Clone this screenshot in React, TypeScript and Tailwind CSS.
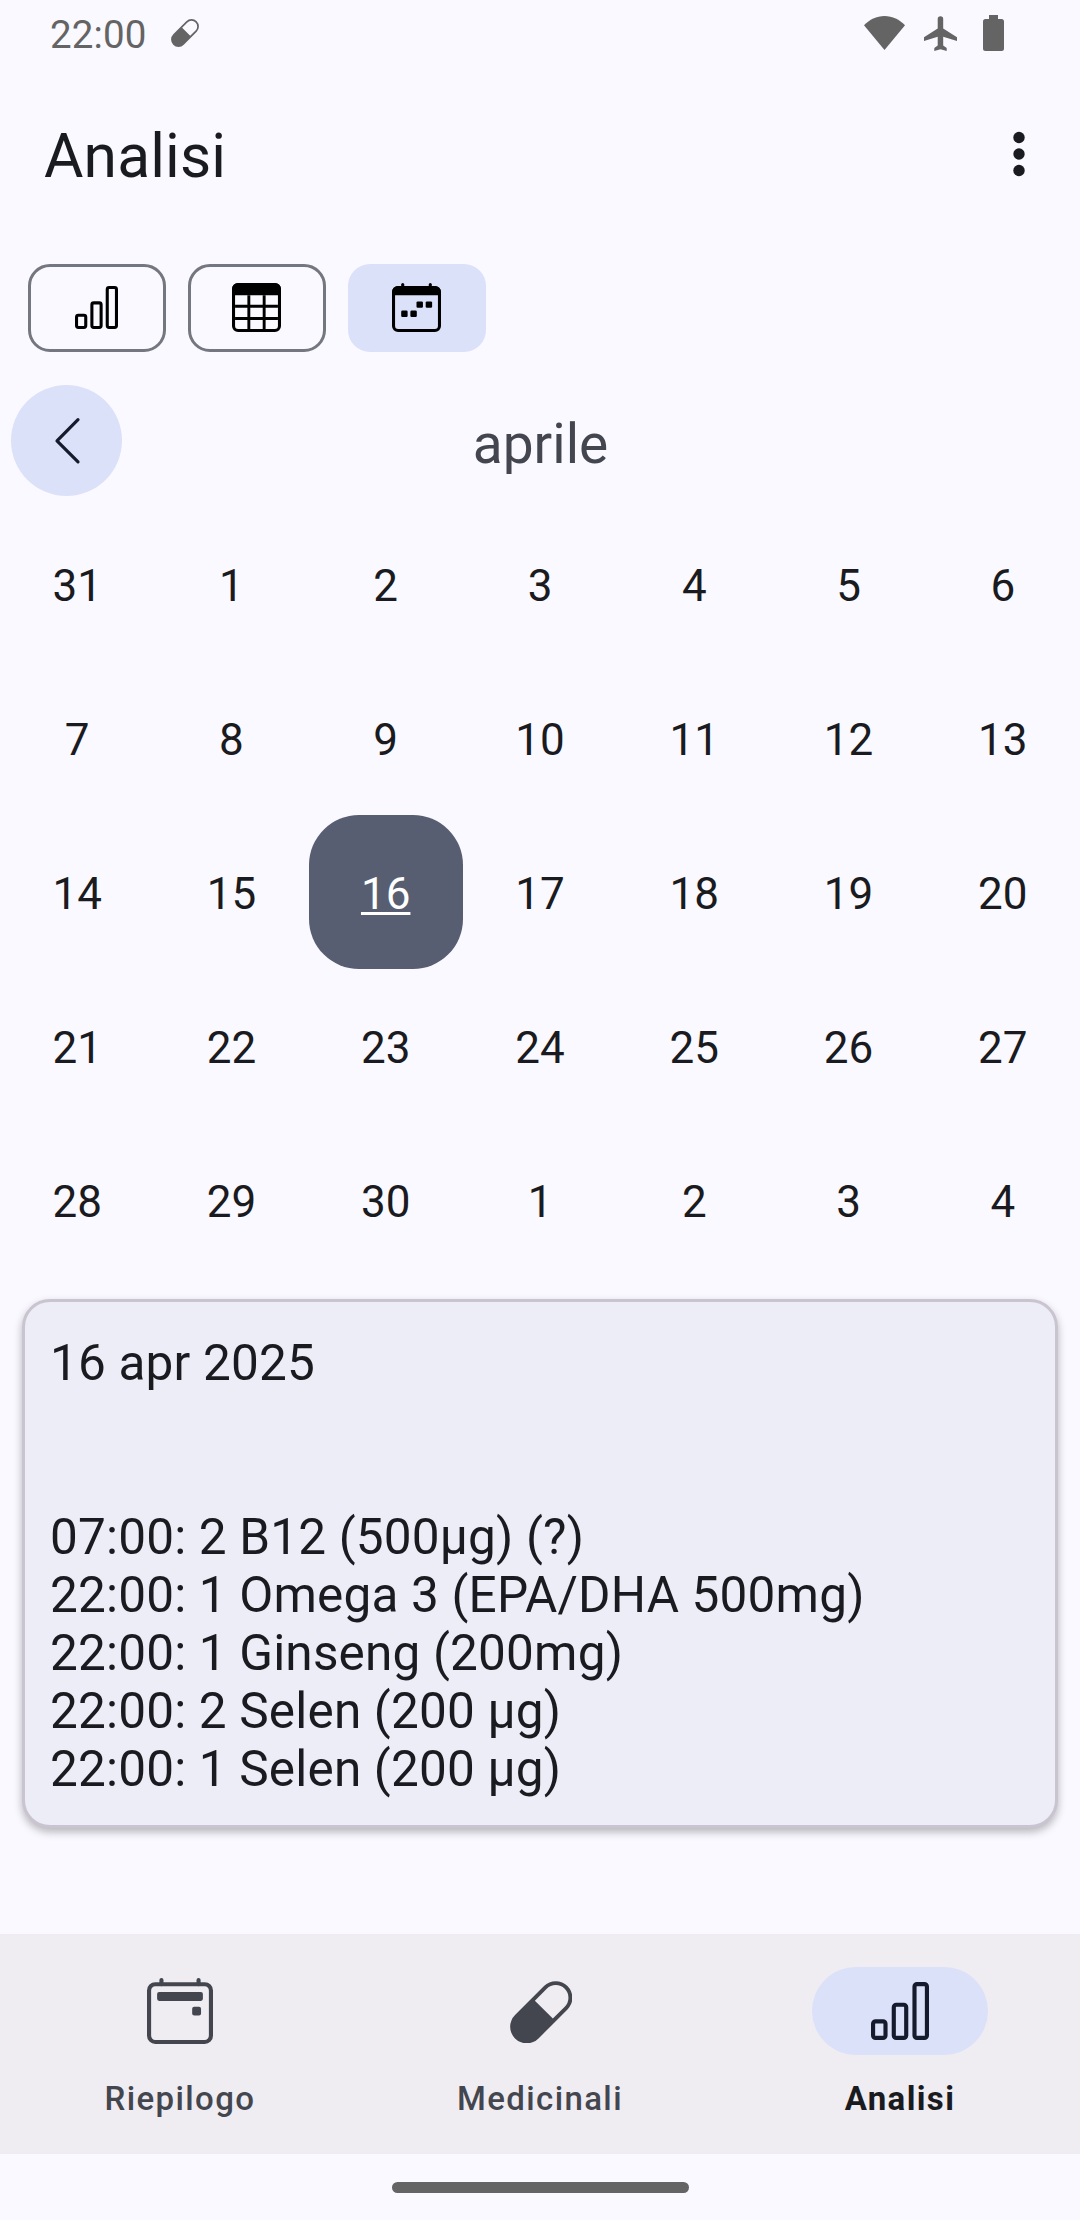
import type { ReactNode } from "react";

const days = [
  31, 1, 2, 3, 4, 5, 6, 7, 8, 9, 10, 11, 12, 13, 14, 15, 16, 17, 18, 19, 20, 21,
  22, 23, 24, 25, 26, 27, 28, 29, 30, 1, 2, 3, 4,
];

const doses = [
  "07:00: 2 B12 (500µg) (?)",
  "22:00: 1 Omega 3 (EPA/DHA 500mg)",
  "22:00: 1 Ginseng (200mg)",
  "22:00: 2 Selen (200 µg)",
  "22:00: 1 Selen (200 µg)",
];

function BarsIcon({ className }: { className: string }) {
  return (
    <svg viewBox="0 0 14 14" className={className} fill="none" stroke="currentColor">
      <rect x="0.5" y="9.5" width="3" height="4" rx="0.6" />
      <rect x="5.5" y="5.5" width="3" height="8" rx="0.6" />
      <rect x="10.5" y="0.5" width="3" height="13" rx="0.6" />
    </svg>
  );
}

function TableIcon() {
  return (
    <svg viewBox="0 0 16 16" className="size-[49px] text-black" fill="none" stroke="currentColor">
      <rect x="0.5" y="0.5" width="15" height="15" rx="1.5" />
      <path d="M0.5 2a1.5 1.5 0 0 1 1.5-1.5h12a1.5 1.5 0 0 1 1.5 1.5v1.5h-15z" fill="currentColor" />
      <path d="M1 7.6h14M1 11.6h14M5.5 4v11.5M10.5 4v11.5" strokeWidth="0.95" />
    </svg>
  );
}

function CalendarDotsIcon() {
  return (
    <svg viewBox="0 0 16 16" className="size-[49px] text-black" fill="currentColor">
      <rect x="0.5" y="1.5" width="15" height="14" rx="1.5" fill="none" stroke="currentColor" />
      <path d="M0 4V3a2 2 0 0 1 2-2h12a2 2 0 0 1 2 2v1z" />
      <rect x="3" y="0" width="1" height="2" rx="0.5" />
      <rect x="12" y="0" width="1" height="2" rx="0.5" />
      <rect x="8" y="6" width="2.1" height="2.1" rx="0.4" />
      <rect x="11" y="6" width="2.1" height="2.1" rx="0.4" />
      <rect x="3" y="9" width="2.1" height="2.1" rx="0.4" />
      <rect x="6" y="9" width="2.1" height="2.1" rx="0.4" />
    </svg>
  );
}

function CalendarIcon() {
  return (
    <svg viewBox="0 0 16 16" className="size-[66px]" fill="currentColor">
      <rect x="0.5" y="1.5" width="15" height="14" rx="1.5" fill="none" stroke="currentColor" />
      <rect x="3" y="0" width="1" height="2" rx="0.5" />
      <rect x="12" y="0" width="1" height="2" rx="0.5" />
      <rect x="2.45" y="3.4" width="11.1" height="2.15" rx="0.5" />
      <rect x="10.95" y="6.95" width="2.15" height="2.15" rx="0.5" />
    </svg>
  );
}

function PillIcon({ className }: { className: string }) {
  return (
    <svg viewBox="-31.25 -31.25 62.5 62.5" className={className} fill="currentColor">
      <path
        fillRule="evenodd"
        transform="rotate(-45)"
        d="M-20.5-16.6H20.5A16.6 16.6 0 0 1 20.5 16.6H-20.5A16.6 16.6 0 0 1-20.5-16.6ZM3.7-12.7V12.7H20.5A12.7 12.7 0 0 0 20.5-12.7Z"
      />
    </svg>
  );
}

function Toggle({ active, children }: { active?: boolean; children: ReactNode }) {
  return (
    <button
      className={
        active
          ? "flex h-[88px] w-[138px] items-center justify-center rounded-[22px] bg-[#dce1fa] pr-px pb-px"
          : "flex h-[88px] w-[138px] items-center justify-center rounded-[22px] border-3 border-[#74777f] pr-px pb-px"
      }
    >
      {children}
    </button>
  );
}

function NavItem({ label, active, children }: { label: string; active?: boolean; children: ReactNode }) {
  return (
    <button className="flex flex-1 flex-col items-center pt-[33px]">
      <span
        className={
          active
            ? "flex h-[88px] w-[176px] items-center justify-center rounded-full bg-[#dce1fa] text-[#151b2c]"
            : "flex h-[88px] w-[176px] items-center justify-center rounded-full text-[#44464f]"
        }
      >
        {children}
      </span>
      <span
        className={
          active
            ? "mt-[22px] text-[33px] leading-[44px] font-bold tracking-[1.375px] text-[#1a1b20]"
            : "mt-[22px] text-[33px] leading-[44px] font-medium tracking-[1.375px] text-[#44464f]"
        }
      >
        {label}
      </span>
    </button>
  );
}

export default function App() {
  return (
    <div className="flex h-[2220px] w-[1080px] flex-col overflow-hidden bg-[#faf9ff] font-['Roboto',sans-serif] text-[#1a1b20]">
      <div className="flex h-[66px] items-center justify-between pr-[76px] pl-[50px] text-[#646464]">
        <div className="flex items-center gap-[24px]">
          <span className="pt-[3px] text-[38.5px] leading-[60px] tracking-[0.15px]">22:00</span>
          <PillIcon className="size-[28px]" />
        </div>
        <div className="flex items-center">
          <svg viewBox="0 0 41 34" className="mr-[19px] h-[34px] w-[41px]" fill="currentColor">
            <path d="M20.5 34 0 9.3C5.5 3.5 12.5 0 20.5 0S35.5 3.5 41 9.3Z" />
          </svg>
          <svg viewBox="0 0 33 35" className="mr-[26px] h-[35px] w-[33px]" fill="currentColor">
            <path d="M13.7 3A2.7 2.7 0 0 1 19.2 3V12.5L33 21.2V25L19.2 20.7V29.5L22.7 32V35L16.5 33.3L10.3 35V32L13.7 29.5V20.7L0 25V21.2L13.7 12.5Z" />
          </svg>
          <svg viewBox="0 0 21 36" className="h-[36px] w-[21px]" fill="currentColor">
            <path d="M6 0h9v4h3.5a2.5 2.5 0 0 1 2.5 2.5v27a2.5 2.5 0 0 1-2.5 2.5h-16a2.5 2.5 0 0 1-2.5-2.5v-27a2.5 2.5 0 0 1 2.5-2.5h3.5z" />
          </svg>
        </div>
      </div>

      <header className="flex h-[176px] items-center justify-between pr-[55px] pl-[44px]">
        <h1 className="pt-[5px] text-[60.5px] leading-[77px] tracking-[0.15px]">Analisi</h1>
        <svg viewBox="0 0 12 46" className="h-[46px] w-[12px]" fill="currentColor">
          <circle cx="6" cy="6.5" r="5.7" />
          <circle cx="6" cy="23" r="5.7" />
          <circle cx="6" cy="39.5" r="5.7" />
        </svg>
      </header>

      <div className="flex gap-[22px] pt-[22px] pl-[28px]">
        <Toggle>
          <BarsIcon className="size-[43px] text-black" />
        </Toggle>
        <Toggle>
          <TableIcon />
        </Toggle>
        <Toggle active>
          <CalendarDotsIcon />
        </Toggle>
      </div>

      <div className="mt-[33px] grid h-[122px] grid-cols-[1fr_auto_1fr] items-start px-[11px]">
        <button className="flex size-[111px] items-center justify-center rounded-full bg-[#dce1fa] text-[#151b2c]">
          <svg viewBox="0 0 66 66" className="size-[66px]" fill="none" stroke="currentColor" strokeWidth="3.2" strokeLinecap="round" strokeLinejoin="round">
            <path d="M44 11.7 23 32.8 44 53.8" />
          </svg>
        </button>
        <h2 className="pt-[27px] pl-px text-[55px] leading-[64px] text-[#44464f]">aprile</h2>
      </div>

      <div className="grid grid-cols-7">
        {days.map((d, i) => (
          <div
            key={i}
            className={
              i === 16
                ? "flex h-[154px] items-center justify-center rounded-[50px] bg-[#585e71] pt-1 text-[44px] text-white"
                : "flex h-[154px] items-center justify-center pt-1 text-[44px]"
            }
          >
            <span className={i === 16 ? "underline decoration-[3px] underline-offset-[3px]" : ""}>{d}</span>
          </div>
        ))}
      </div>

      <section className="mx-[22px] mt-[22px] h-[529px] rounded-[28px] border-[3px] border-[#cac4d0] bg-[#ecedf6] px-[25px] pt-[32px] text-[49.5px] leading-[58px] tracking-[0.18px] shadow-[0_4px_9px_rgba(0,0,0,0.28)]">
        <p>16 apr 2025</p>
        <ul className="mt-[116px]">
          {doses.map((d) => (
            <li key={d}>{d}</li>
          ))}
        </ul>
      </section>

      <nav className="mt-auto flex h-[220px] shrink-0 bg-[#efedf1]">
        <NavItem label="Riepilogo">
          <CalendarIcon />
        </NavItem>
        <NavItem label="Medicinali">
          <PillIcon className="mt-0.5 ml-0.5 size-[62.5px]" />
        </NavItem>
        <NavItem label="Analisi" active>
          <BarsIcon className="size-[58px]" />
        </NavItem>
      </nav>
      <div className="flex h-[66px] shrink-0 items-center justify-center">
        <div className="h-[11px] w-[297px] rounded-full bg-[#646464]" />
      </div>
    </div>
  );
}
